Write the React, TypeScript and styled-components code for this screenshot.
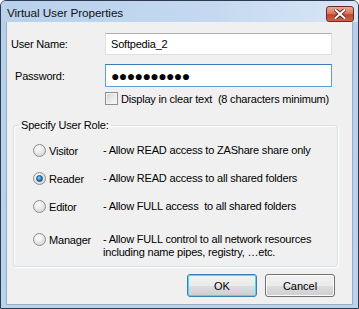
import React from "react";
import styled, { createGlobalStyle } from "styled-components";

const Global = createGlobalStyle`
  html, body { margin: 0; padding: 0; background: #ffffff; }
  #root { width: 359px; height: 309px; }
`;

const Window = styled.div`
  box-sizing: border-box;
  width: 359px;
  height: 309px;
  border: 1px solid #2c3b4d;
  border-radius: 6px 6px 0 0;
  background: linear-gradient(to bottom, #c4d8ef 0px, #b7cfeb 22px, #bcd3ec 100%);
  display: flex;
  flex-direction: column;
  font-family: "Liberation Sans", Arial, sans-serif;
  font-size: 11px;
  letter-spacing: -0.2px;
  color: #000;
  overflow: hidden;
`;

const TitleBar = styled.div`
  height: 21px;
  flex: none;
  display: flex;
  align-items: center;
  justify-content: space-between;
  padding: 0 4px 0 6px;
  background: linear-gradient(to right, #b9d1ed 0%, #c4d9f0 60%, #d8e6f6 100%);
`;

const Title = styled.span`
  font-size: 11.8px;
  letter-spacing: -0.1px;
  color: #111;
  margin-top: 2px;
`;

const CloseButton = styled.div`
  box-sizing: border-box;
  width: 28px;
  height: 16px;
  margin-top: 4px;
  border: 1px solid #6e2b22;
  border-radius: 3px;
  background: linear-gradient(to bottom, #e9a896 0%, #d67b65 45%, #c2452d 55%, #d0624a 100%);
  display: flex;
  align-items: center;
  justify-content: center;
`;

const Client = styled.div`
  flex: 1;
  margin: 0 5px 3px 5px;
  background: #f0f0f0;
  border: 1px solid #98adc6;
  border-top: none;
  display: flex;
  flex-direction: column;
  padding-top: 11px;
`;

const FieldRow = styled.div<{ $gap?: number }>`
  display: flex;
  align-items: center;
  margin-top: ${(p) => p.$gap ?? 0}px;
`;

const Label = styled.label<{ $indent: number }>`
  box-sizing: border-box;
  width: 98px;
  padding-left: ${(p) => p.$indent}px;
`;

const TextBox = styled.div<{ $focused?: boolean; $h: number }>`
  box-sizing: border-box;
  width: 227px;
  height: ${(p) => p.$h}px;
  background: #fff;
  border: 1px solid ${(p) => (p.$focused ? "#5c9fd8" : "#dbdfe6")};
  border-top-color: ${(p) => (p.$focused ? "#3d7bb8" : "#abadb3")};
  display: flex;
  align-items: center;
  padding-left: 5px;
  font-size: 11px;
`;

const Dots = styled.span`
  font-size: 14px;
  letter-spacing: -0.6px;
  line-height: 1;
`;

const CheckRow = styled.div`
  display: flex;
  align-items: center;
  margin-top: 5px;
  padding-left: 98px;
  gap: 3px;
`;

const CheckBox = styled.span`
  box-sizing: border-box;
  width: 13px;
  height: 13px;
  border: 1px solid #8e8f8f;
  background: linear-gradient(135deg, #cfd0d1 0%, #e9e9ea 50%, #f6f6f6 100%);
  box-shadow: inset 0 0 0 1px #f4f4f4;
`;

const Group = styled.fieldset`
  box-sizing: border-box;
  margin: 14px 0 0 6px;
  width: 325px;
  height: 148px;
  border: 1px solid #d5dfe5;
  border-radius: 3px;
  box-shadow: inset 1px 1px 0 #fff, 1px 1px 0 #fff;
  padding: 12px 0 0 19px;
  display: flex;
  flex-direction: column;
  gap: 14px;
`;

const Legend = styled.legend`
  padding: 0 2px;
  margin-left: -14px;
  line-height: 13px;
`;

const RoleRow = styled.div<{ $extra?: number }>`
  display: grid;
  grid-template-columns: 13px 51px 1fr;
  column-gap: 3px;
  align-items: start;
  line-height: 14px;
  margin-top: ${(p) => p.$extra ?? 0}px;
`;

const Radio = styled.span<{ $checked?: boolean }>`
  box-sizing: border-box;
  width: 13px;
  height: 13px;
  border-radius: 50%;
  border: 1px solid #8c8f92;
  background: radial-gradient(circle at 40% 35%, #ffffff 0%, #e9e9e9 45%, #c9cacb 100%);
  display: flex;
  align-items: center;
  justify-content: center;
  &::after {
    content: "";
    display: ${(p) => (p.$checked ? "block" : "none")};
    width: 5px;
    height: 5px;
    border-radius: 50%;
    background: radial-gradient(circle at 40% 35%, #8fd3ff 0%, #1b79c2 60%, #0b4a86 100%);
    border: 1px solid #1d4e7f;
  }
`;

const RoleName = styled.span``;

const RoleDesc = styled.span`
  line-height: 13px;
  white-space: pre;
`;

const ButtonRow = styled.div`
  display: flex;
  justify-content: flex-end;
  gap: 8px;
  margin-top: 7px;
  padding-right: 17px;
`;

const Button = styled.button<{ $default?: boolean }>`
  box-sizing: border-box;
  width: 70px;
  height: 23px;
  font-family: "Liberation Sans", Arial, sans-serif;
  font-size: 11px;
  color: #000;
  border: 1px solid ${(p) => (p.$default ? "#3c7fb1" : "#707070")};
  border-radius: 3px;
  background: linear-gradient(to bottom, #f2f2f2 0%, #ebebeb 50%, #dddddd 51%, #cfcfcf 100%);
  box-shadow: inset 0 0 0 1px ${(p) => (p.$default ? "#48d8fb" : "#fcfcfc")};
  padding: 0;
`;

const roles = [
  { name: "Visitor", desc: ["- Allow READ access to ZAShare share only"] },
  { name: "Reader", desc: ["- Allow READ access to all shared folders"], checked: true },
  { name: "Editor", desc: ["- Allow FULL access  to all shared folders"] },
  {
    name: "Manager",
    desc: ["- Allow FULL control to all network resources", "including name pipes, registry, \u2026etc."],
    extra: 5,
  },
];

export default function App() {
  return (
    <>
      <Global />
      <Window>
        <TitleBar>
          <Title>Virtual User Properties</Title>
          <CloseButton>
            <svg width="12" height="10" viewBox="0 0 12 10">
              <path d="M1.5 1 L10.5 9 M10.5 1 L1.5 9" stroke="#4a1a12" strokeWidth="3.6" strokeLinecap="square" />
              <path d="M1.5 1 L10.5 9 M10.5 1 L1.5 9" stroke="#ffffff" strokeWidth="2" strokeLinecap="square" />
            </svg>
          </CloseButton>
        </TitleBar>
        <Client>
          <FieldRow>
            <Label $indent={4}>User Name:</Label>
            <TextBox $h={22}>Softpedia_2</TextBox>
          </FieldRow>
          <FieldRow $gap={9}>
            <Label $indent={8}>Password:</Label>
            <TextBox $h={23} $focused>
              <Dots>{"\u25CF".repeat(10)}</Dots>
            </TextBox>
          </FieldRow>
          <CheckRow>
            <CheckBox />
            <span>Display in clear text&nbsp; (8 characters minimum)</span>
          </CheckRow>
          <Group>
            <Legend>Specify User Role:</Legend>
            {roles.map((r) => (
              <RoleRow key={r.name} $extra={r.extra}>
                <Radio $checked={r.checked} />
                <RoleName>{r.name}</RoleName>
                <RoleDesc>
                  {r.desc.map((d, i) => (
                    <div key={i}>{d}</div>
                  ))}
                </RoleDesc>
              </RoleRow>
            ))}
          </Group>
          <ButtonRow>
            <Button $default>OK</Button>
            <Button>Cancel</Button>
          </ButtonRow>
        </Client>
      </Window>
    </>
  );
}
